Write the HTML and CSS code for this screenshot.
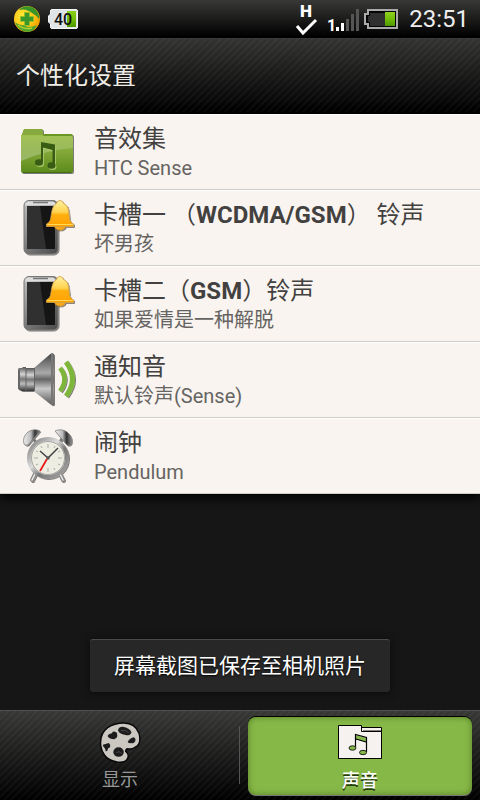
FILE: index.html
```html
<!DOCTYPE html>
<html lang="zh-CN">
<head>
<meta charset="utf-8">
<meta name="viewport" content="width=device-width, initial-scale=1">
<title>个性化设置</title>
<link rel="stylesheet" href="styles.css">
</head>
<body>
<svg class="defs" aria-hidden="true">
  <defs>
    <linearGradient id="body" x1="0" y1="0" x2="1" y2="1"><stop offset="0" stop-color="#c4c4c4"/><stop offset=".5" stop-color="#777"/><stop offset="1" stop-color="#4a4a4a"/></linearGradient>
    <linearGradient id="bell" x1="0" y1="0" x2="0" y2="1"><stop offset="0" stop-color="#fff0a0"/><stop offset=".45" stop-color="#ffd24d"/><stop offset=".55" stop-color="#ffae10"/><stop offset="1" stop-color="#ffa200"/></linearGradient>
    <linearGradient id="folder" x1="0" y1="0" x2="0" y2="1"><stop offset="0" stop-color="#a0c04e"/><stop offset="1" stop-color="#5c8a1c"/></linearGradient>
    <linearGradient id="gloss" x1="0" y1="0" x2="0" y2="1"><stop offset="0" stop-color="#fff" stop-opacity=".05"/><stop offset="1" stop-color="#fff" stop-opacity=".28"/></linearGradient>
    <linearGradient id="metal" x1="0" y1="0" x2="0" y2="1"><stop offset="0" stop-color="#555"/><stop offset=".3" stop-color="#d5d5d5"/><stop offset=".5" stop-color="#777"/><stop offset=".7" stop-color="#bbb"/><stop offset="1" stop-color="#333"/></linearGradient>
    <linearGradient id="cone" x1="0" y1="0" x2="0" y2="1"><stop offset="0" stop-color="#444"/><stop offset=".38" stop-color="#aaa"/><stop offset=".5" stop-color="#666"/><stop offset=".68" stop-color="#c8c8c8"/><stop offset="1" stop-color="#555"/></linearGradient>
    <linearGradient id="ring" x1="0" y1="0" x2="1" y2="1"><stop offset="0" stop-color="#777"/><stop offset=".4" stop-color="#ddd"/><stop offset=".6" stop-color="#777"/><stop offset="1" stop-color="#aaa"/></linearGradient>
    <linearGradient id="chrome" x1="0" y1="0" x2="1" y2="0"><stop offset="0" stop-color="#eee"/><stop offset=".45" stop-color="#bbb"/><stop offset=".7" stop-color="#333"/><stop offset="1" stop-color="#888"/></linearGradient>
    <linearGradient id="charge" x1="0" y1="0" x2="0" y2="1"><stop offset="0" stop-color="#8fd01f"/><stop offset=".5" stop-color="#72be08"/><stop offset="1" stop-color="#4c9700"/></linearGradient>
    <radialGradient id="orb" cx=".35" cy=".4" r=".7"><stop offset="0" stop-color="#ffee3a"/><stop offset=".6" stop-color="#ffc414"/><stop offset="1" stop-color="#f39a00"/></radialGradient>
    <filter id="soft" x="-20%" y="-20%" width="150%" height="150%"><feDropShadow dx="1" dy="1" stdDeviation=".7" flood-opacity=".5"/></filter>
    <symbol id="phone" viewBox="-2 0 60 60">
      <g filter="url(#soft)">
        <rect x="5" y="2.500" width="34" height="53.500" rx="5" fill="url(#body)" stroke="#777"/>
        <path d="M9 3.500h25q3 1 3 4H6q0-3 3-4z" fill="#ddd"/>
        <path d="M14 4.500h15" stroke="#777" stroke-width="1.500"/>
      </g>
      <rect x="8" y="8" width="28" height="43" fill="#151515"/>
      <path d="M8 8h13l6 43H8z" fill="#303030"/>
      <g filter="url(#soft)">
        <path d="M36 28h10v2l-3 2h-4l-3-2z" fill="#f6a91a" stroke="#c98822" stroke-width=".6"/>
        <path d="M37.500 5.500Q38 2.500 41 2.500q3 0 3.500 3 4.500 1.500 5 7l1 9q1 3.500 4 4.500v2.500h-27V26q3-1 4-4.500l1.500-9q1-5.500 4.500-7z" fill="url(#bell)" stroke="#d3a047" stroke-width=".8"/>
        <path d="M28 26.500h26" stroke="#ffd85b"/>
      </g>
    </symbol>
  </defs>
</svg>

<header>
  <div class="status">
    <svg class="orb" viewBox="0 0 26 26" role="img" aria-label="安全">
      <circle cx="13" cy="13" r="13" fill="url(#orb)"/>
      <path d="M5 4C9-1 17-1 22 4q4 4 3 9-3-4-7-6Q12 2 5 4z" fill="#389528"/>
      <path d="M1 16q4 4 9 3 4 4 13 0-3 7-10 7Q4 25 1 16z" fill="#4da52c"/>
      <path d="M4 19q6 5 14 3" stroke="#b5d32e" stroke-width="1.500" fill="none"/>
      <path d="M10.500 6.500h5v4h4v5h-4v4h-5v-4h-4v-5h4z" fill="#3a982b" stroke="#98be25"/>
    </svg>
    <svg class="level" viewBox="0 0 30 20" role="img" aria-label="电量 40">
      <path d="M4 .5h24q1.500 0 1.500 1.500v16q0 1.500-1.500 1.500H4Q2.500 19.500 2.500 18v-3L.5 13V7l2-2V2Q2.500.500 4 .5z" fill="#dfe4e7" stroke="#f4f4f4"/>
      <rect x="19" y="2" width="9" height="16" fill="url(#charge)"/>
      <text x="15" y="16" class="level-text">40</text>
    </svg>
    <span class="spacer"></span>
    <svg class="net" viewBox="0 0 24 34" role="img" aria-label="H 网络">
      <text x="11" y="15" class="net-text">H</text>
      <path d="M2 24l6 7L21 18" fill="none" stroke="#fff" stroke-width="3"/>
    </svg>
    <svg class="signal" viewBox="0 0 33 24" role="img" aria-label="信号 1">
      <text x="0" y="22" class="signal-text">1</text>
      <path d="M9 18h3v4H9zM14 14h3v8h-3z" fill="#fff"/>
      <path d="M19 10h3v12h-3zM24 5h3v17h-3zM29 0h3v22h-3z" fill="#555"/>
    </svg>
    <svg class="battery" viewBox="0 0 34 20" role="img" aria-label="电池">
      <path d="M4 1h29v18H4v-4H1V5h3z" fill="#050505" stroke="#aaa" stroke-width="2"/>
      <path d="M6 4h15v13H6v-4H4V7h2z" fill="#303030"/>
      <rect x="21" y="3" width="10" height="14" fill="url(#charge)"/>
    </svg>
    <time class="clock">23:51</time>
  </div>
  <h1 class="title">个性化设置</h1>
</header>

<main class="content">
  <ul class="list">
    <li><button class="row" type="button">
      <svg class="icon" viewBox="-1 -1 60 60" aria-hidden="true">
        <g filter="url(#soft)">
          <path d="M5 9q0-3 3-3h15q2 0 2 2v3h28q2 0 2 2v10H3V14z" fill="#6b9626"/>
          <path d="M5 9q0-3 3-3h15q2 0 2 2v4H4z" fill="#86aa3d"/>
          <path d="M3 12h21l2 1h27q2 0 2 2v33q0 2-2 2H5q-2 0-2-2z" fill="url(#folder)"/>
        </g>
        <path d="M3 13h52v12Q28 27 3 38z" fill="url(#gloss)"/>
        <path d="M5 49.500h48" stroke="#426e10"/>
        <g transform="translate(1 1)" fill="#a8c76a"><path d="M23 19l14 3v20h-2V28l-10-3v14h-2z"/><ellipse cx="21" cy="40" rx="4" ry="3"/><ellipse cx="33.500" cy="43" rx="4" ry="3"/></g>
        <g fill="#395c14"><path d="M23 19l14 2.500V42h-2.500V27L25 24.500V39h-2z"/><ellipse cx="21" cy="39.500" rx="4" ry="3.200"/><ellipse cx="33.500" cy="42.500" rx="4" ry="3.200"/></g>
      </svg>
      <span class="text"><span class="name">音效集</span><span class="value">HTC Sense</span></span>
    </button></li>
    <li><button class="row" type="button">
      <svg class="icon" aria-hidden="true"><use href="#phone"/></svg>
      <span class="text"><span class="name">卡槽一 （<b>WCDMA/GSM</b>） 铃声</span><span class="value">坏男孩</span></span>
    </button></li>
    <li><button class="row" type="button">
      <svg class="icon" aria-hidden="true"><use href="#phone"/></svg>
      <span class="text"><span class="name">卡槽二（<b>GSM</b>）铃声</span><span class="value">如果爱情是一种解脱</span></span>
    </button></li>
    <li><button class="row" type="button">
      <svg class="icon" viewBox="0 0 60 60" aria-hidden="true">
        <g filter="url(#soft)">
          <path d="M2 18h3l1-1h3v24H5l-4-2V19z" fill="url(#metal)"/>
          <path d="M8 18h10v23H8z" fill="url(#metal)"/>
          <path d="M17 18L34 3.500q3-1 3 2v48q0 3-3 1L17 41z" fill="url(#cone)"/>
          <path d="M34 4q2.500-1 2.500 2v47q0 3-2.500 1.500z" fill="#777"/>
          <path d="M2 20v18" stroke="#666" stroke-width="2"/>
          <path d="M9 18v23M17.500 18v23" stroke="#666"/>
        </g>
        <g fill="none" stroke="#7db63a" filter="url(#soft)">
          <path d="M43 18q9 11 0 23" stroke-width="4.500"/>
          <path d="M49 12q13 17 0 34" stroke-width="5"/>
        </g>
      </svg>
      <span class="text"><span class="name">通知音</span><span class="value">默认铃声(Sense)</span></span>
    </button></li>
    <li><button class="row" type="button">
      <svg class="icon" viewBox="0 0 60 60" aria-hidden="true">
        <g filter="url(#soft)">
          <path d="M18 48l-3 6M43 48l3 6" stroke="#888" stroke-width="4" stroke-linecap="round"/>
          <path d="M18 48l-3 6M43 48l3 6" stroke="#eee" stroke-width="1.500" stroke-linecap="round"/>
          <path d="M15 11l5 7M46 11l-5 7" stroke="#777" stroke-width="2.500"/>
          <path d="M7 18Q5 11 11 6q6-4 12-1L11 19q-2 1-4-1z" fill="url(#chrome)" stroke="#777" stroke-width=".7"/>
          <path d="M54 18q2-7-4-12-6-4-12-1l12 14q2 1 4-1z" fill="url(#chrome)" stroke="#777" stroke-width=".7"/>
          <circle cx="31" cy="32" r="19" fill="#eeede2" stroke="url(#ring)" stroke-width="4"/>
        </g>
        <circle cx="31" cy="32" r="16.500" fill="none" stroke="#888" stroke-width=".7"/>
        <path d="M31 18v4M31 42v4M17 32h4M41 32h4M24 20l1 2M38 20l-1 2M24 44l1-2M38 44l-1-2M19 25l2 1M43 25l-2 1M19 39l2-1M43 39l-2-1" stroke="#aaa"/>
        <path d="M23 25l8 7L41 22" fill="none" stroke="#444" stroke-width="1.500"/>
        <path d="M30 33l-7 12" stroke="#e81414" stroke-width="1.700"/>
        <circle cx="31" cy="32" r="1.700" fill="#555"/>
      </svg>
      <span class="text"><span class="name">闹钟</span><span class="value">Pendulum</span></span>
    </button></li>
  </ul>
  <div class="toast" role="status">屏幕截图已保存至相机照片</div>
</main>

<nav class="tabs">
  <button class="tab" type="button">
    <svg class="tab-icon" viewBox="0 0 44 44" aria-hidden="true">
      <path d="M26 2Q38 2 42 13q3 12-5 15-3 2-7 1-2 0-2 3 4 3 2 7-2 5-11 4Q5 41 2 27 0 14 9 7q7-5 17-5z" fill="#cbc7c1" stroke="#080808" stroke-width="1.500"/>
      <g fill="#1c1c1c">
        <path d="M20 10q0-4 5-4 7 1 9 6-1 3-5 3-8-1-9-5z"/>
        <path d="M9 16q1-3 4-3l2-2q4 0 4 3 1 4-3 5-5 0-7-3z"/>
        <path d="M30 22q2-4 6-5 3 1 2 4-1 3-4 2-2 1-4-1z"/>
        <path d="M4 26q0-2 3-2l3-1q3 2 1 5-2 0-2 3l-2 1q0-3-3-6z"/>
        <ellipse cx="20.500" cy="32.500" rx="5.500" ry="5"/>
      </g>
      <path d="M23 10q5-1 8 2M18 33q3-2 6 1" stroke="#484848" fill="none"/>
    </svg>
    <span>显示</span>
  </button>
  <button class="tab active" type="button" aria-current="page">
    <svg class="tab-icon wide" viewBox="0 0 46 44" aria-hidden="true">
      <path d="M24.500 6.500h20v6h-20z" fill="#f5f2ef" stroke="#000"/>
      <path d="M1.500 4.500h23v6h20v27h-43z" fill="#f5f2ef" stroke="#000" stroke-linejoin="round"/>
      <path d="M26 9.500h18" stroke="#8c8178"/>
      <path d="M19 14l10 3v4l-10-3z" fill="#86b848"/>
      <path d="M18.500 26V13.500l11 3V31M19 18l10 3" fill="none" stroke="#000" stroke-width="1.200"/>
      <ellipse cx="15.500" cy="27" rx="3.500" ry="2.200" fill="#86b848" stroke="#222"/>
      <ellipse cx="26" cy="31.500" rx="3.500" ry="2.200" fill="#86b848" stroke="#222"/>
    </svg>
    <span>声音</span>
  </button>
</nav>
</body>
</html>
```
FILE: styles.css
```css
* {
  box-sizing: border-box;
}

body {
  display: flex;
  flex-direction: column;
  min-height: 100vh;
  margin: 0;
  background: #161616;
  font-family: Roboto, "Noto Sans CJK SC", sans-serif;
}

.defs {
  position: absolute;
  width: 0;
  height: 0;
}

button {
  border: 0;
  padding: 0;
  background: none;
  font: inherit;
  cursor: pointer;
}

.status {
  display: flex;
  align-items: center;
  height: 38px;
  padding: 0 11px 0 14px;
  background: linear-gradient(#383836, #000);
  border-bottom: 1px solid #000;
}

.spacer {
  flex: 1;
}

.orb {
  width: 26px;
  height: 26px;
  margin-right: 8px;
}

.level {
  width: 30px;
  height: 20px;
}

.level-text {
  font: 500 16px Roboto, sans-serif;
  text-anchor: middle;
  fill: #111;
}

.net {
  width: 24px;
  height: 34px;
  margin-right: 8px;
}

.net-text {
  font: 900 17px Roboto, sans-serif;
  text-anchor: middle;
  fill: #fff;
}

.signal {
  width: 33px;
  height: 24px;
  margin: 5px 4px 0 0;
  overflow: visible;
}

.signal-text {
  font: bold 16px Roboto, sans-serif;
  fill: #fff;
}

.battery {
  width: 34px;
  height: 20px;
  margin-right: 11px;
}

.clock {
  color: #eee;
  font-size: 24px;
  line-height: 38px;
}

.title {
  margin: 0;
  height: 76px;
  padding: 0 16px;
  border-top: 1px solid #3c3c3b;
  border-bottom: 2px solid #000;
  background:
    repeating-linear-gradient(135deg, rgba(255, 255, 255, 0.03) 0 2px, transparent 2px 5px),
    linear-gradient(#333332, #000);
  color: #f0ede6;
  font-size: 24px;
  font-weight: 400;
  line-height: 74px;
}

.content {
  position: relative;
  flex: 1;
  background: #161616;
}

.list {
  margin: 0;
  padding: 0;
  list-style: none;
  box-shadow: 0 4px 10px #000;
}

.row {
  display: flex;
  align-items: center;
  width: 100%;
  height: 76px;
  padding: 0 17px;
  gap: 17px;
  border-top: 1px solid #fff;
  border-bottom: 1px solid #d0ccc8;
  background: #f9f4f0;
  text-align: left;
}

.icon {
  flex: none;
  width: 60px;
  height: 60px;
}

.text {
  display: flex;
  flex-direction: column;
  min-width: 0;
  padding-top: 1px;
}

.name {
  color: #42413f;
  font-size: 24px;
  line-height: 32px;
}

.value {
  color: #666462;
  font-size: 20px;
  line-height: 27px;
}

.toast {
  position: absolute;
  bottom: 18px;
  left: 50%;
  width: 300px;
  transform: translateX(-50%);
  border-top: 1px solid #4b4b4b;
  border-radius: 3px;
  background: #272727;
  box-shadow: 0 1px 8px rgba(0, 0, 0, 0.6);
  color: #fff;
  font-size: 21px;
  line-height: 52px;
  text-align: center;
  text-shadow: 0 1px 2px #000;
  white-space: nowrap;
}

.tabs {
  display: grid;
  grid-template-columns: 1fr 1fr;
  height: 90px;
  border-top: 1px solid #50504e;
  background:
    repeating-linear-gradient(135deg, rgba(255, 255, 255, 0.03) 0 2px, transparent 2px 5px),
    linear-gradient(#383837, #000);
  box-shadow: 0 -2px 8px rgba(0, 0, 0, 0.6);
}

.tab {
  position: relative;
  display: flex;
  flex-direction: column;
  align-items: center;
  padding-top: 10px;
  color: #999;
  font-size: 18px;
  line-height: 26px;
}

.tab:first-child::after {
  content: "";
  position: absolute;
  top: 15px;
  right: 0;
  width: 1px;
  height: 58px;
  background: #555;
}

.tab-icon {
  width: 42px;
  height: 42px;
  margin-bottom: 4px;
}

.tab-icon.wide {
  width: 46px;
  height: 44px;
  margin-bottom: 3px;
}

.active {
  margin: 6px 8px 5px;
  padding-top: 4px;
  border-radius: 8px;
  background: #86b848;
  box-shadow: inset 0 0 6px #567c24, 0 -1px 0 #000, 0 1px 0 #777;
  color: #fff;
  text-shadow: 0 2px 0 #263c10;
  font-weight: 500;
}
```
